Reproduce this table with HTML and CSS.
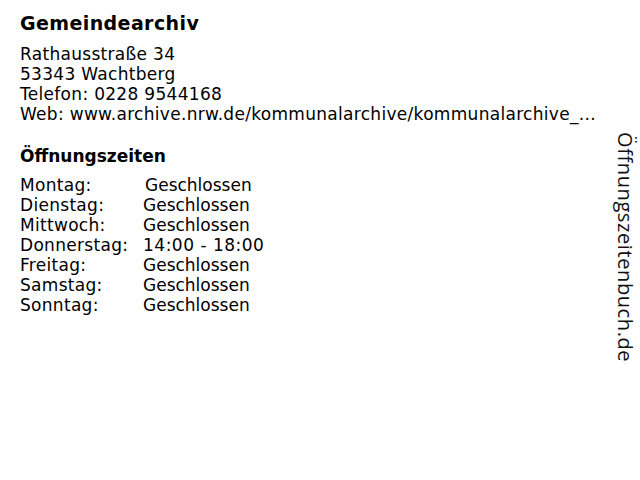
FILE: index.html
```html
<!DOCTYPE html>
<html lang="de">
<head>
<meta charset="utf-8">
<link rel="stylesheet" href="styles.css">
</head>
<body>
<div class="page">
  <main class="content">
    <h1 class="title">Gemeindearchiv</h1>
    <div class="address">
      <div>Rathausstraße 34</div>
      <div>53343 Wachtberg</div>
      <div>Telefon: 0228 9544168</div>
      <div class="web">Web: www.archive.nrw.de/kommunalarchive/kommunalarchive_...</div>
    </div>
    <h2 class="subtitle">Öffnungszeiten</h2>
    <div class="hours">
      <span class="day first">Montag:</span><span class="time first">Geschlossen</span>
      <span class="day">Dienstag:</span><span class="time">Geschlossen</span>
      <span class="day">Mittwoch:</span><span class="time">Geschlossen</span>
      <span class="day">Donnerstag:</span><span class="time digits">14:00 - 18:00</span>
      <span class="day">Freitag:</span><span class="time">Geschlossen</span>
      <span class="day">Samstag:</span><span class="time">Geschlossen</span>
      <span class="day">Sonntag:</span><span class="time">Geschlossen</span>
    </div>
  </main>
  <aside class="side">Öffnungszeitenbuch.de</aside>
</div>
</body>
</html>
```

FILE: styles.css
```css
html, body {
  margin: 0;
  padding: 0;
  background: #fff;
}
body {
  font-family: "DejaVu Sans", Verdana, sans-serif;
  color: #000;
}
.page {
  display: flex;
  width: 640px;
  height: 480px;
  box-sizing: border-box;
  padding: 11px 0 0 20px;
}
.content {
  flex: 1;
  min-width: 0;
}
.title {
  margin: 0;
  font-size: 19px;
  line-height: 24px;
  font-weight: bold;
  letter-spacing: 0.4px;
}
.address {
  margin-top: 9px;
  font-size: 17px;
  line-height: 20px;
  letter-spacing: 0.3px;
  white-space: nowrap;
}
.subtitle {
  margin: 22px 0 0;
  font-size: 17px;
  line-height: 20px;
  font-weight: bold;
}
.hours {
  margin-top: 9px;
  display: grid;
  grid-template-columns: 123px auto;
  justify-content: start;
  font-size: 17px;
  line-height: 20px;
  letter-spacing: 0.3px;
}
.time {
  letter-spacing: 0;
}
.time.digits {
  letter-spacing: 0.5px;
}
.time.first {
  padding-left: 2px;
}
.side {
  writing-mode: vertical-rl;
  font-family: "Open Sans", sans-serif;
  font-size: 20px;
  line-height: 24px;
  letter-spacing: 0.6px;
  color: #111;
  padding-top: 121px;
  margin-right: 3px;
  width: 24px;
}
```
